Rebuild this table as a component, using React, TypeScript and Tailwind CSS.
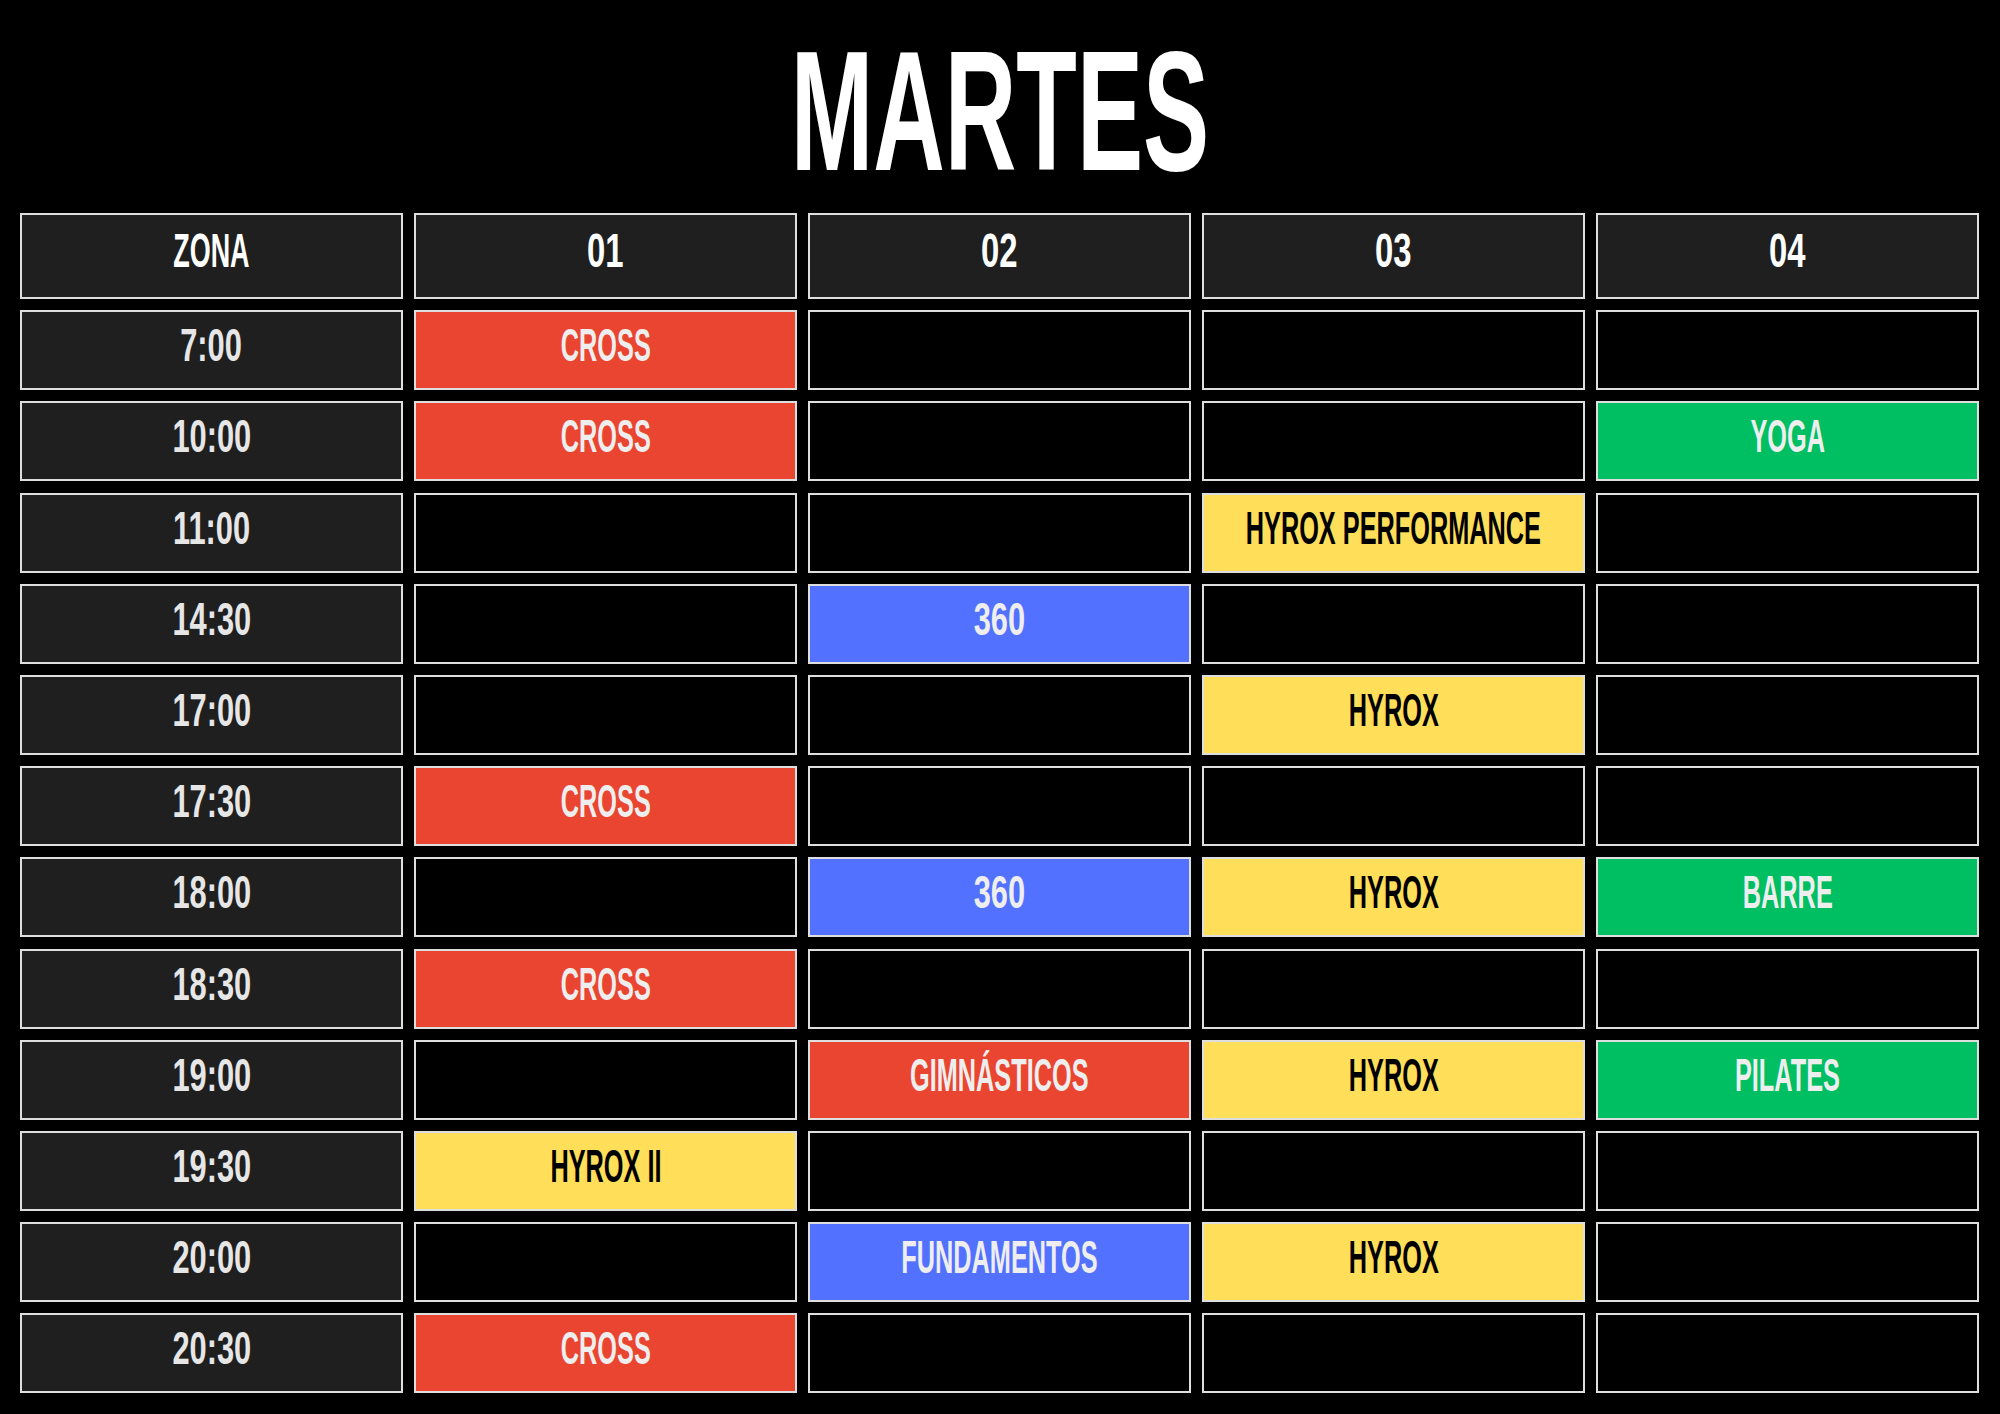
type Kind = "r" | "b" | "y" | "g";
type Slot = [string, Kind] | null;

const rows: [string, Slot[]][] = [
  ["7:00", [["CROSS", "r"], null, null, null]],
  ["10:00", [["CROSS", "r"], null, null, ["YOGA", "g"]]],
  ["11:00", [null, null, ["HYROX PERFORMANCE", "y"], null]],
  ["14:30", [null, ["360", "b"], null, null]],
  ["17:00", [null, null, ["HYROX", "y"], null]],
  ["17:30", [["CROSS", "r"], null, null, null]],
  ["18:00", [null, ["360", "b"], ["HYROX", "y"], ["BARRE", "g"]]],
  ["18:30", [["CROSS", "r"], null, null, null]],
  ["19:00", [null, ["GIMNÁSTICOS", "r"], ["HYROX", "y"], ["PILATES", "g"]]],
  ["19:30", [["HYROX II", "y"], null, null, null]],
  ["20:00", [null, ["FUNDAMENTOS", "b"], ["HYROX", "y"], null]],
  ["20:30", [["CROSS", "r"], null, null, null]],
];

const bg: Record<Kind, string> = {
  r: "bg-[#ea4530] text-[#eeeeee]",
  b: "bg-[#5271ff] text-[#eeeeee]",
  y: "bg-[#ffde59] text-black",
  g: "bg-[#00bf63] text-[#eeeeee]",
};

const font = { fontFamily: '"Liberation Sans", Arial, sans-serif' };

function Label({ text, numeric }: { text: string; numeric?: boolean }) {
  return (
    <span
      className={
        "inline-block whitespace-nowrap font-bold " +
        (numeric ? "scale-x-[0.67]" : "scale-x-[0.55]")
      }
    >
      {text}
    </span>
  );
}

export default function App() {
  return (
    <div className="min-h-screen bg-black px-[20px] pb-[20px]" style={font}>
      <h1 className="pt-[26px] mb-[17px] text-center text-[170px] leading-[170px] font-bold text-white">
        <span className="inline-block scale-x-[0.583]">MARTES</span>
      </h1>

      <div className="grid grid-cols-5 w-[1959px] gap-x-[11px] gap-y-[11.2px]">
        {["ZONA", "01", "02", "03", "04"].map((h) => (
          <div
            key={h}
            className="flex h-[86px] items-center justify-center border-2 border-[#dedede] bg-[#1f1f1f] pb-[12px] text-[49px] leading-none text-white"
          >
            <Label text={h} numeric={h !== "ZONA"} />
          </div>
        ))}

        {rows.map(([time, slots]) => (
          <div key={time} className="contents">
            <div className="flex h-[80px] items-center justify-center border-2 border-[#dedede] bg-[#1f1f1f] pb-[10px] text-[46px] leading-none text-[#e6e6e6]">
              <Label text={time} numeric />
            </div>
            {slots.map((s, i) => (
              <div
                key={i}
                className={
                  "flex h-[80px] items-center justify-center border-2 border-[#dedede] pb-[10px] text-[46px] leading-none " +
                  (s ? bg[s[1]] : "bg-black")
                }
              >
                {s && <Label text={s[0]} numeric={/^\d+$/.test(s[0])} />}
              </div>
            ))}
          </div>
        ))}
      </div>
    </div>
  );
}
